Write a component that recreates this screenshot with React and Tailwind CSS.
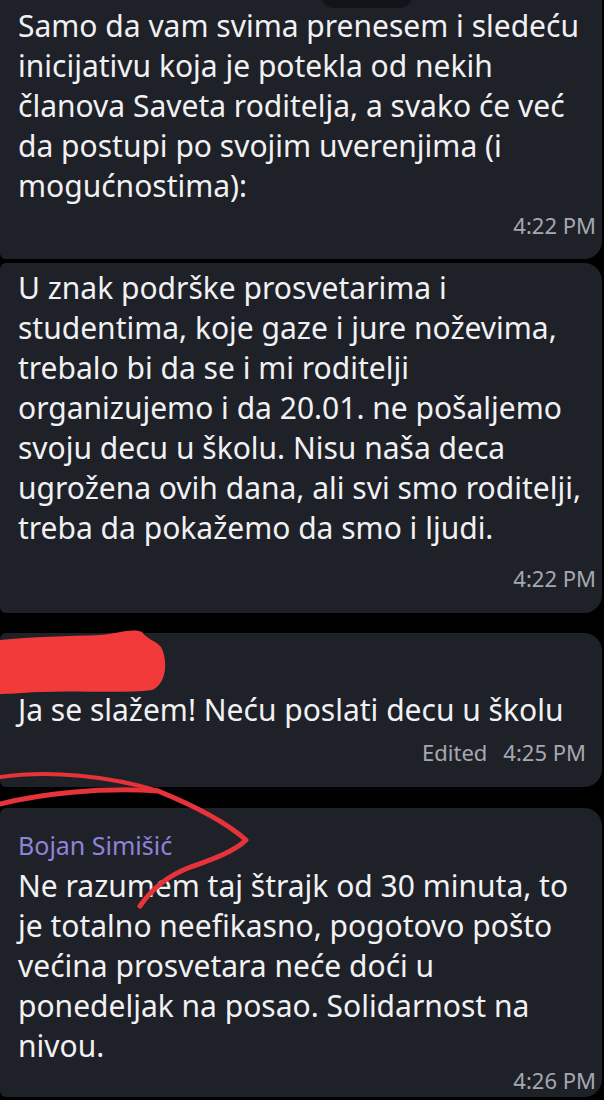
import React from "react";

const msgs = [
  {
    lines: [
      "Samo da vam svima prenesem i sledeću",
      "inicijativu koja je potekla od nekih",
      "članova Saveta roditelja, a svako će već",
      "da postupi po svojim uverenjima (i",
      "mogućnostima):",
    ],
    time: "4:22 PM",
  },
  {
    lines: [
      "U znak podrške prosvetarima i",
      "studentima, koje gaze i jure noževima,",
      "trebalo bi da se i mi roditelji",
      "organizujemo i da 20.01. ne pošaljemo",
      "svoju decu u školu. Nisu naša deca",
      "ugrožena ovih dana, ali svi smo roditelji,",
      "treba da pokažemo da smo i ljudi.",
    ],
    time: "4:22 PM",
  },
];

function Lines({ lines }) {
  return (
    <div className="text-[30px] leading-[40px] text-[#f1f1f3]">
      {lines.map((l) => (
        <div key={l} className="whitespace-nowrap">{l}</div>
      ))}
    </div>
  );
}

function Time({ children, className = "" }) {
  return (
    <div className={`text-right text-[22px] leading-[28px] text-[#a6a8b0] ${className}`}>
      {children}
    </div>
  );
}

export default function App() {
  return (
    <div
      className="relative w-[604px] h-[1100px] overflow-hidden bg-black"
      style={{ fontFamily: "'Noto Sans', Roboto, sans-serif" }}
    >
      <div className="absolute left-[320px] top-[-20px] w-[93px] h-[28px] rounded-[14px] bg-[#131419]" />

      <div className="flex flex-col">
        <div className="w-[602px] bg-[#1f2129] rounded-br-[18px] rounded-bl-[6px] pl-[18px] pt-[6px] pb-[20px]">
          <Lines lines={msgs[0].lines} />
          <Time className="mt-[5px] pr-[6px]">{msgs[0].time}</Time>
        </div>

        <div className="mt-[4px] w-[602px] bg-[#1f2129] rounded-r-[18px] rounded-l-[6px] pl-[18px] pt-[5px] pb-[21px]">
          <Lines lines={msgs[1].lines} />
          <Time className="mt-[16px] pr-[6px]">{msgs[1].time}</Time>
        </div>

        <div className="mt-[20px] w-[602px] bg-[#1f2129] rounded-r-[18px] rounded-l-[6px] pl-[18px] pt-[57px] pb-[21px]">
          <Lines lines={["Ja se slažem! Neću poslati decu u školu"]} />
          <Time className="mt-[8px] pr-[16px]">
            <span className="mr-[16px]">Edited</span>4:25 PM
          </Time>
        </div>

        <div className="mt-[21px] w-[602px] h-[289px] bg-[#1f2129] rounded-r-[18px] rounded-l-[6px] pl-[18px] pt-[22px]">
          <div className="text-[25px] leading-[30px] text-[#8d84d8]">Bojan Simišić</div>
          <div className="mt-[6px]">
            <Lines
              lines={[
                "Ne razumem taj štrajk od 30 minuta, to",
                "je totalno neefikasno, pogotovo pošto",
                "većina prosvetara neće doći u",
                "ponedeljak na posao. Solidarnost na",
                "nivou.",
              ]}
            />
          </div>
          <Time className="pr-[6px]">4:26 PM</Time>
        </div>
      </div>

      <svg className="absolute left-0 top-0" width="604" height="1100" viewBox="0 0 604 1100" fill="none">
        <path
          d="M0 640 C30 637 70 636 100 635 C120 633 132 628 142 632 C148 640 155 640 161 647 C168 660 167 684 152 690 C120 694 80 690 40 692 C20 693 8 694 0 694 Z"
          fill="#f23a3a"
        />
        <path
          d="M0 777 C50 770 110 776 158 791"
          stroke="#e53339"
          strokeWidth="4"
          strokeLinecap="round"
        />
        <path
          d="M0 804 C40 794 100 787 158 791 C195 806 228 824 246 840 C234 852 210 860 188 868 C168 876 153 887 140 906"
          stroke="#e53339"
          strokeWidth="5"
          strokeLinecap="round"
          strokeLinejoin="round"
        />
      </svg>
    </div>
  );
}
